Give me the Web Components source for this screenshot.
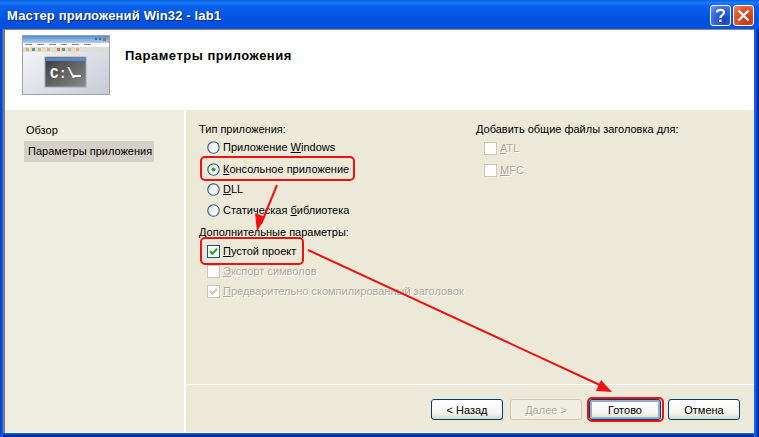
<!DOCTYPE html>
<html lang="ru">
<head>
<meta charset="utf-8">
<title>Мастер приложений Win32</title>
<style>
  html, body { margin: 0; padding: 0; }
  body { width: 759px; height: 437px; overflow: hidden; font: 11px "Liberation Sans", "Noto Sans", sans-serif; color: #000; }
</style>
</head>
<body>
<xp-window>
  <xp-titlebar slot="title">Мастер приложений Win32 - lab1</xp-titlebar>
  <wizard-header slot="header">Параметры приложения</wizard-header>
  <wizard-nav slot="nav">
    <nav-item>Обзор</nav-item>
    <nav-item selected>Параметры приложения</nav-item>
  </wizard-nav>
  <settings-page slot="page">
    <group-label slot="left">Тип приложения:</group-label>
    <xp-option slot="left" type="radio" gap="4">Приложение <u>W</u>indows</xp-option>
    <xp-option slot="left" type="radio" gap="8" checked><u>К</u>онсольное приложение</xp-option>
    <xp-option slot="left" type="radio" gap="6"><u>D</u>LL</xp-option>
    <xp-option slot="left" type="radio" gap="7">Статическая <u>б</u>иблиотека</xp-option>
    <group-label slot="left" style="margin-top:8px">Дополнительные параметры:</group-label>
    <xp-option slot="left" type="check" gap="5" checked><u>П</u>устой проект</xp-option>
    <xp-option slot="left" type="check" gap="6" disabled><u>Э</u>кспорт символов</xp-option>
    <xp-option slot="left" type="check" gap="6" checked disabled><u>П</u>редварительно скомпилированный заголовок</xp-option>
    <group-label slot="right">Добавить общие файлы заголовка для:</group-label>
    <xp-option slot="right" type="check" gap="5" disabled><u>A</u>TL</xp-option>
    <xp-option slot="right" type="check" gap="8" disabled><u>M</u>FC</xp-option>
  </settings-page>
  <button-bar slot="page-footer">
    <xp-button>&lt; Назад</xp-button>
    <xp-button disabled>Далее &gt;</xp-button>
    <xp-button default>Готово</xp-button>
    <xp-button>Отмена</xp-button>
  </button-bar>
  <red-marks slot="overlay"></red-marks>
</xp-window>

<script>
function define(name, css, html) {
  customElements.define(name, class extends HTMLElement {
    connectedCallback() {
      if (this.shadowRoot) return;
      this.attachShadow({ mode: 'open' });
      this.shadowRoot.innerHTML = `<style>${css}</style>${typeof html === 'function' ? html(this) : html}`;
    }
  });
}

define('xp-window', `
  :host { display: block; position: relative; width: 759px; height: 437px; box-sizing: border-box;
    background: linear-gradient(#0048d8, #0048d8); }
  .frame { display: flex; flex-direction: column; height: 437px; }
  .inner { flex: 1; display: flex; flex-direction: column; min-height: 0; margin: 0 5px 0 3px;
    border-left: 2px solid #7f7d74; border-top: 1px solid #8a8a84; background: #fff; }
  .body { flex: 1; display: flex; min-height: 0; padding-bottom: 1px; }
  .right { flex: 1; margin-left: 2px; display: flex; flex-direction: column; background: #ece9d8; }
  .nav { width: 179px; background: #efede0; }
  .edge { height: 4px; background: linear-gradient(#0a5cf0 0, #0a50e0 25%, #0038b8 50%, #001f8e 100%); }
  .side { position: absolute; top: 29px; bottom: 0; }
  .l { left: 0; width: 3px; background: linear-gradient(90deg, #0831d9, #0855dd 50%, #166aee); }
  .r { right: 0; width: 5px; background: linear-gradient(90deg, #1a6af0, #0855dd 40%, #00138c); }
`, `
  <div class="frame">
    <slot name="title"></slot>
    <div class="inner">
      <slot name="header"></slot>
      <div class="body">
        <div class="nav"><slot name="nav"></slot></div>
        <div class="right">
          <slot name="page"></slot>
          <slot name="page-footer"></slot>
        </div>
      </div>
    </div>
    <div class="edge"></div>
  </div>
  <div class="side l"></div><div class="side r"></div>
  <slot name="overlay"></slot>
`);

define('xp-titlebar', `
  :host { display: flex; align-items: center; height: 29px; box-sizing: border-box; padding: 1px 5px 0 7px;
    background: linear-gradient(#0a5fe6 0, #1a7cf6 3px, #0a60ee 6px, #0358e6 14px, #0250dc 24px, #0a50e4 29px);
    color: #fff; font: bold 13px "Liberation Sans", "Noto Sans", sans-serif; letter-spacing: .15px; text-shadow: 1px 1px 1px #0a2a80; }
  .t { flex: 1; white-space: nowrap; }
  .b { width: 21px; height: 21px; box-sizing: border-box; border: 1px solid #fff; border-radius: 3px; margin-left: 2px; }
  svg { display: block; }
  .help { background: radial-gradient(circle at 70% 75%, #1840b8, #3a70e6 65%, #6f9cf0); }
  .close { background: radial-gradient(circle at 70% 75%, #c43410, #e0562c 60%, #ee8a68); }
`, `
  <div class="t"><slot></slot></div>
  <div class="b help"><svg width="19" height="19" viewBox="0 0 19 19"><path d="M5.8 6.4C6 3.4 13 2.6 13 6.4c0 2.8-3.6 2.6-3.6 5.6" fill="none" stroke="#fff" stroke-width="2.2"/><rect x="8.2" y="13.6" width="2.4" height="2.4" fill="#fff"/></svg></div>
  <div class="b close"><svg width="19" height="19" viewBox="0 0 19 19"><path d="M4.5 4.5l10 10M14.5 4.5l-10 10" stroke="#fff" stroke-width="2.4"/></svg></div>
`);

define('wizard-header', `
  :host { display: flex; align-items: flex-start; height: 80px; box-sizing: border-box; padding: 5px 0 0 17px; background: #fff; }
  .h { margin: 13px 0 0 15px; font: bold 13px "Liberation Sans", "Noto Sans", sans-serif; letter-spacing: .5px; }
  svg { display: block; flex: none; }
  text { font: bold 14px "Liberation Mono", monospace; fill: #fff; }
`, `
  <svg width="88" height="60" viewBox="0 0 88 60">
    <defs>
      <linearGradient id="a" x1="0" y1="0" x2="1" y2="1"><stop offset="0" stop-color="#fafbfd"/><stop offset="1" stop-color="#c6cad4"/></linearGradient>
      <linearGradient id="b" x1="0" y1="0" x2="0" y2="1"><stop offset="0" stop-color="#4f8ed0"/><stop offset="1" stop-color="#b6d0ea"/></linearGradient>
      <linearGradient id="c" x1="0" y1="0" x2="1" y2="1"><stop offset="0" stop-color="#3a3a3a"/><stop offset="1" stop-color="#8a8a8a"/></linearGradient>
    </defs>
    <rect x=".5" y=".5" width="87" height="59" fill="url(#a)" stroke="#9ca0ac"/>
    <rect x="1" y="1" width="86" height="7" fill="url(#b)"/>
    <rect x="73" y="3" width="2" height="2" fill="#3464b0"/><rect x="77" y="3" width="2" height="2" fill="#3464b0"/><rect x="81" y="3" width="3" height="3" fill="#c0604c"/>
    <rect x="1" y="8" width="86" height="4" fill="#fff"/>
    <path d="M3 9.5h7M15 9.5h7M27 9.5h7M39 9.5h6M50 9.5h7M62 9.5h7" stroke="#8a8a8a"/>
    <rect x="1" y="12" width="86" height="5" fill="#dcdcdc"/>
    <path d="M4 13h3v3H4zM16 13h3v3h-3zM25 13h3v3h-3zM46 13h3v3h-3zM54 13h3v3h-3z" fill="#d8b860"/>
    <path d="M10 13h3v3h-3zM40 13h3v3h-3z" fill="#5c9a80"/>
    <path d="M35 13h3v3h-3z" fill="#d87830"/>
    <rect x="23" y="22" width="41" height="30" fill="url(#c)" stroke="#a0a6b4"/>
    <rect x="24" y="23" width="40" height="3" fill="#5a8ac8"/>
    <text x="28" y="43">C:\\</text>
    <rect x="51" y="40" width="8" height="2" fill="#fff"/>
  </svg>
  <div class="h"><slot></slot></div>
`);

define('wizard-nav', `:host { display: block; padding: 10px 30px 0 19px; }`, `<slot></slot>`);

define('nav-item', `
  :host { display: block; height: 21px; width: 130px; line-height: 21px; padding-left: 2px; box-sizing: border-box; white-space: nowrap; }
  :host([selected]) { background: #d4d0c8; padding-left: 4px; }
`, `<slot></slot>`);

define('settings-page', `
  :host { display: flex; height: 275px; box-sizing: border-box; padding: 12px 0 0 13px; border-bottom: 1px solid #fff; background: #ece9d8; }
  .l { width: 277px; } .r { flex: 1; }
`, `<div class="l"><slot name="left"></slot></div><div class="r"><slot name="right"></slot></div>`);

define('group-label', `:host { display: block; height: 14px; line-height: 14px; white-space: nowrap; }`, `<slot></slot>`);

define('xp-option', `
  :host { display: flex; align-items: center; height: 14px; white-space: nowrap; }
  :host([disabled]) .txt { color: #aca899; text-shadow: 1px 1px 0 #fff; }
  svg { display: block; flex: none; }
  .box { margin: 0 3px 0 8px; }
  .rad { margin: 0 3px 0 8px; }
`, (el) => {
  el.style.marginTop = (el.getAttribute('gap') || 0) + 'px';
  const dis = el.hasAttribute('disabled'), on = el.hasAttribute('checked');
  const icon = el.getAttribute('type') === 'radio'
    ? `<svg class="rad" width="13" height="13" viewBox="0 0 13 13"><defs><linearGradient id="g" x1="0" y1="0" x2="1" y2="1"><stop offset="0" stop-color="#dcd9cc"/><stop offset=".6" stop-color="#fff"/></linearGradient></defs><circle cx="6.5" cy="6.5" r="5.7" fill="url(#g)" stroke="#2a5a8a" stroke-width="1.1"/>${on ? '<circle cx="6.5" cy="6.5" r="2.1" fill="#2fa83a"/>' : ''}</svg>`
    : `<svg class="box" width="13" height="13" viewBox="0 0 13 13"><rect x=".5" y=".5" width="12" height="12" fill="#fff" stroke="${dis ? '#c9c7ba' : '#1c5180'}"/>${on ? `<path d="M3 6.2l2.4 2.6L10 3.8" fill="none" stroke="${dis ? '#c9c7ba' : '#21a121'}" stroke-width="2"/>` : ''}</svg>`;
  return `${icon}<span class="txt"><slot></slot></span>`;
});

define('button-bar', `
  :host { display: flex; justify-content: flex-end; gap: 7px; padding: 14px 14px 0 0; }
`, `<slot></slot>`);

define('xp-button', `
  :host { display: flex; align-items: center; justify-content: center; width: 72px; height: 21px; box-sizing: border-box;
    border: 1px solid #003c74; border-radius: 3px; background: linear-gradient(#fff, #f4f3ee 70%, #dcd8c8); white-space: nowrap; }
  :host([disabled]) { border-color: #c9c7ba; background: #f0eee2; color: #aca899; text-shadow: 1px 1px 0 #fff; }
  :host([default]) { box-shadow: inset 0 0 0 2px #90aed4; }
`, `<slot></slot>`);

define('red-marks', `
  :host { position: absolute; left: 0; top: 0; width: 759px; height: 437px; pointer-events: none; }
  svg { display: block; }
`, `
  <svg width="759" height="437" viewBox="0 0 759 437" fill="none" stroke="#ee1111" stroke-width="2">
    <rect x="201" y="157" width="153" height="23" rx="4"/>
    <rect x="201" y="238" width="102" height="26" rx="4"/>
    <rect x="588" y="398" width="75" height="23" rx="4"/>
    <path d="M277 185L261 224"/>
    <path d="M265 217L257 232L255 213Z" fill="#ee1111" stroke="none"/>
    <path d="M308 250L602 386"/>
    <path d="M601 380L612 392L596 391Z" fill="#ee1111" stroke="none"/>
  </svg>
`);
</script>
</body>
</html>
